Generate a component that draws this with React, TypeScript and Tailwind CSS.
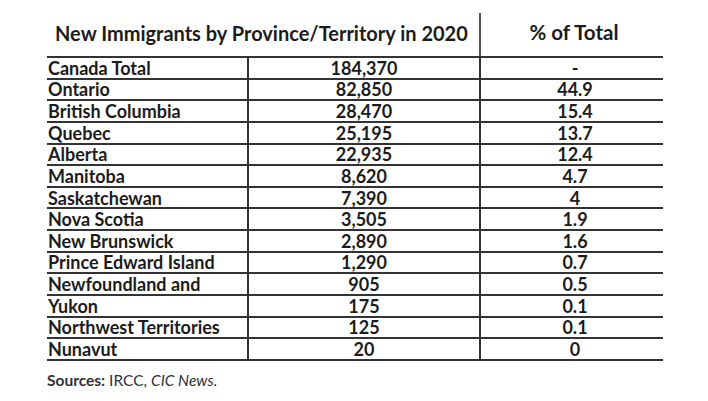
const rows: [string, string, string][] = [
  ["Canada Total", "184,370", "-"],
  ["Ontario", "82,850", "44.9"],
  ["British Columbia", "28,470", "15.4"],
  ["Quebec", "25,195", "13.7"],
  ["Alberta", "22,935", "12.4"],
  ["Manitoba", "8,620", "4.7"],
  ["Saskatchewan", "7,390", "4"],
  ["Nova Scotia", "3,505", "1.9"],
  ["New Brunswick", "2,890", "1.6"],
  ["Prince Edward Island", "1,290", "0.7"],
  ["Newfoundland and", "905", "0.5"],
  ["Yukon", "175", "0.1"],
  ["Northwest Territories", "125", "0.1"],
  ["Nunavut", "20", "0"],
];

const App = () => {
  return (
    <div
      className="w-[708px] h-[401px] bg-white text-[#1c1c1c] pl-[47px] pt-[13px]"
      style={{ fontFamily: "Lato, 'Open Sans', sans-serif" }}
    >
      <div className="w-[616px]">
        {/* header */}
        <div className="flex h-[45px] border-b-2 border-[#333]">
          <div className="w-[432px] flex items-center pl-[8px] pb-[4px] text-[20px] font-bold">
            New Immigrants by Province/Territory in 2020
          </div>
          <div className="flex-1 flex items-center justify-center pl-[4px] pb-[4px] border-l-2 border-[#555] text-[20.5px] font-bold">
            % of Total
          </div>
        </div>
        {/* body */}
        {rows.map(([name, count, pct]) => (
          <div key={name} className="flex h-[21.64px] border-b-2 border-[#333] text-[18px] font-bold leading-none">
            <div className="w-[200px] flex items-center pl-[1px]">{name}</div>
            <div className="w-[232px] flex items-center justify-center border-l-2 border-[#333]">{count}</div>
            <div className="flex-1 flex items-center justify-center pl-[6px] border-l-2 border-[#333]">{pct}</div>
          </div>
        ))}
        <div className="mt-[8px] text-[15.5px] text-[#333]">
          <span className="font-bold">Sources:</span> IRCC, <span className="italic">CIC News.</span>
        </div>
      </div>
    </div>
  );
};

export default App;
